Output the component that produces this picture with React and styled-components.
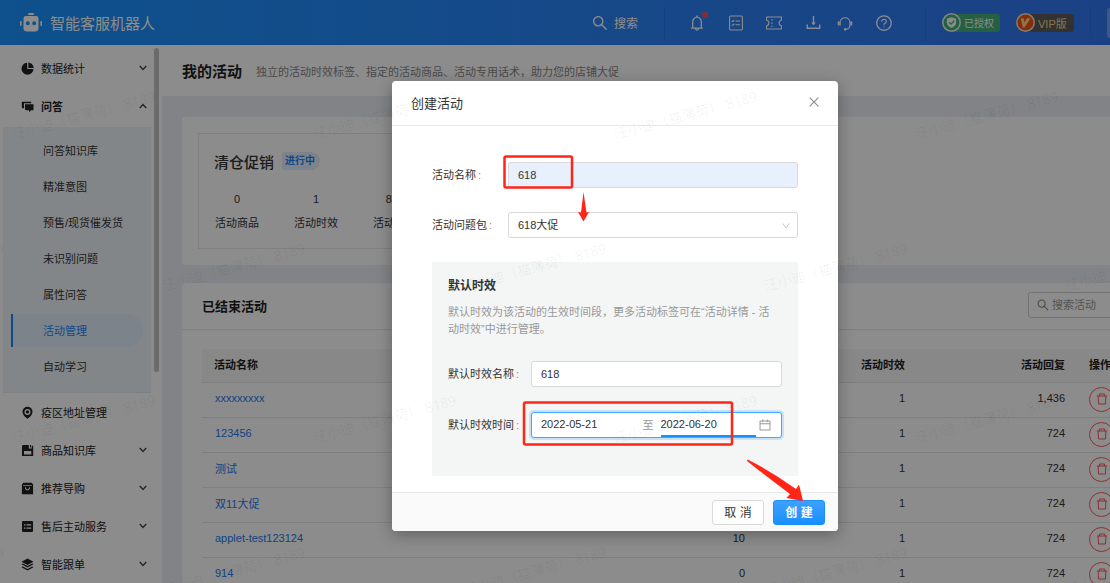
import styled, { createGlobalStyle, css } from "styled-components";
import {
    AiOutlineBell,
    AiOutlineCalendar,
    AiOutlineClose,
    AiOutlineDelete,
    AiOutlineDown,
    AiOutlineDownload,
    AiOutlineQuestionCircle,
    AiOutlineSearch
} from "react-icons/ai";

const GlobalStyle = createGlobalStyle`
    * {
        box-sizing: border-box;
    }
    html, body, #root {
        height: 100%;
    }
    body {
        margin: 0;
        overflow: hidden;
        font-family: "Liberation Sans", "Noto Sans CJK SC", sans-serif;
        font-size: 11px;
        color: #333;
    }
    button, input, select {
        font-family: inherit;
        font-size: inherit;
        color: inherit;
    }
    h1, h2, h3, p, ul {
        margin: 0;
        padding: 0;
    }
    ul {
        list-style: none;
    }
    a {
        color: inherit;
        text-decoration: none;
    }
`

const Page = styled.div`
    min-width: 1230px;
    height: 100vh;
    display: flex;
    flex-direction: column;
    position: relative;
    overflow: hidden;
`

/* ---------- header ---------- */

const Header = styled.header`
    height: 45px;
    flex: none;
    display: flex;
    align-items: center;
    padding: 0 20px;
    color: #fff;
    background: linear-gradient(90deg, #1a94ff 0%, #2a84f8 50%, #3474f0 100%);
`

const Brand = styled.h1`
    display: flex;
    align-items: center;
    gap: 8px;
    margin-right: auto;
    font-size: 15px;
    font-weight: 400;
`

const HeaderGroup = styled.div`
    display: flex;
    align-items: center;
    gap: ${props => props.$gap || 16}px;
    padding: 0 ${props => props.$right || 16}px 0 ${props => props.$left || 16}px;
    height: 32px;
    border-right: 1px solid rgba(0, 0, 0, 0.08);
`

const IconGroup = styled.div`
    display: flex;
    gap: 14px;
`

const HeaderButton = styled.button`
    display: flex;
    align-items: center;
    gap: 5px;
    padding: 0;
    border: none;
    background: none;
    color: #fff;
    font-size: 12px;
    position: relative;
    cursor: pointer;
`

const RedDot = styled.span`
    position: absolute;
    top: -2px;
    right: -2px;
    width: 6px;
    height: 6px;
    border-radius: 50%;
    background: #ff4d4f;
`

const Badge = styled.span`
    display: flex;
    align-items: center;
    gap: 3px;
    width: 58px;
    height: 18px;
    border-radius: 9px 3px 3px 9px;
    white-space: nowrap;
    font-size: ${props => props.$vip ? 11 : 10}px;
    color: ${props => props.$vip ? "#f5d58a" : "#fff"};
    background: ${props => props.$vip ? "#5c5c5c" : "#45b07a"};
`

const UserBox = styled.div`
    width: 103px;
    height: 30px;
    margin-left: 16px;
    border-radius: 3px;
    background: rgba(255, 255, 255, 0.3);
`

const RobotIcon = () => (
    <svg width="22" height="20" viewBox="0 0 22 20" fill="#fff">
        <rect x="8" y="0" width="6" height="2" rx="1"/>
        <path fillRule="evenodd" d="M6 3h10a2.500 2.500 0 0 1 2.500 2.500v10c0 2-1.500 3-3.500 3H7c-2 0-3.500-1-3.500-3v-10A2.500 2.500 0 0 1 6 3zm1.800 5.200a2 2 0 1 0 0 4 2 2 0 0 0 0-4zm6.400 0a2 2 0 1 0 0 4 2 2 0 0 0 0-4z"/>
        <rect x="0" y="8" width="1.600" height="5" rx=".8"/>
        <rect x="20.400" y="8" width="1.600" height="5" rx=".8"/>
    </svg>
)

const LineIcon = styled.svg`
    width: 16px;
    height: 16px;
    fill: none;
    stroke: currentColor;
    stroke-width: 1.1;
    stroke-linecap: round;
    stroke-linejoin: round;
`

const TodoIcon = () => (
    <LineIcon viewBox="0 0 16 16">
        <rect x="1.600" y="1" width="12.800" height="14" rx="1.200"/>
        <path d="M4.200 6l.6.6L6 5.400M8 6h3.600M4.200 9.800l.6.6L6 9.200M8 9.800h3.600"/>
    </LineIcon>
)

const TicketIcon = () => (
    <LineIcon viewBox="0 0 16 16">
        <path d="M.6 2h14.800v3.200c-1.500.3-2.300 1.400-2.300 2.800s.8 2.500 2.300 2.800V14H.6v-3.200C2.100 10.500 2.900 9.400 2.900 8S2.100 5.500.6 5.200z"/>
        <path d="M6 4.500v.7M6 7.700v.7M6 10.800v.7"/>
    </LineIcon>
)

const HeadsetIcon = () => (
    <LineIcon viewBox="0 0 16 16">
        <path d="M3.200 10.300V7a4.900 4.900 0 0 1 9.700 0v3.200c0 2.300-1.400 3.700-3.600 4.100"/>
        <path strokeWidth="2" d="M1.700 7.200v2.200M14.300 7.200v2.200"/>
        <circle cx="8.200" cy="14.300" r=".8" fill="currentColor"/>
    </LineIcon>
)

const ShieldMark = () => (
    <svg width="19" height="19" viewBox="0 0 19 19">
        <circle cx="9.500" cy="9.500" r="8.700" fill="#45b07a" stroke="#e8f5ee" strokeWidth="1.500"/>
        <path fill="#f4fff8" d="M9.500 4.200l4.600 1.500v4c0 2.400-1.900 4.100-4.600 5.200-2.700-1.100-4.600-2.800-4.600-5.200v-4z"/>
        <path fill="none" stroke="#45b07a" strokeWidth="1.300" d="M7 9.200l2 1.900 3.100-3.300"/>
    </svg>
)

const VipMark = () => (
    <svg width="19" height="19" viewBox="0 0 19 19">
        <circle cx="9.500" cy="9.500" r="8.700" fill="#f2570f" stroke="#f7ded0" strokeWidth="1.500"/>
        <path fill="#ffd98c" d="M4.700 5.800l3-.5.8 4.300 2.500-4.400h3.400L8.600 14.400H6.900z"/>
    </svg>
)

/* ---------- sidebar ---------- */

const Body = styled.div`
    flex: 1;
    display: flex;
    min-height: 0;
`

const Sidebar = styled.nav`
    width: 162px;
    flex: none;
    display: flex;
    align-items: flex-start;
    background: #fff;
    overflow: hidden;
`

const Menu = styled.ul`
    flex: 1;
    padding: 4px 0 0 3px;
`

const MenuLink = styled.a`
    height: 38px;
    display: flex;
    align-items: center;
    gap: 7px;
    padding: 0 7px 0 18px;
    color: #222;
    font-weight: ${props => props.$open ? 600 : 400};
`

const MenuIcon = styled.svg`
    width: 13px;
    height: 13px;
    flex: none;
    fill: #222;
`

const Arrow = styled.svg`
    width: 8px;
    height: 6px;
    margin-left: auto;
    fill: none;
    stroke: #444;
    stroke-width: 1.4;
    transform: ${props => props.$up ? "rotate(180deg)" : "none"};
`

const SubMenu = styled.ul`
    margin: 2px 3px 0 0;
    padding: 7px 8px 9px;
    display: flex;
    flex-direction: column;
    gap: 3px;
    background: #eff5f8;
    border-bottom: 1px solid #e4ebee;
`

const SubLink = styled.a`
    display: flex;
    align-items: center;
    height: 33px;
    padding: 0 0 1px 30px;
    border-left: 2px solid transparent;
    border-radius: 0 17px 17px 0;
    white-space: nowrap;
    color: #333;
    ${props => props.$active && css`
        color: #1f86f5;
        border-left-color: #1f86f5;
        background: #e2eefc;
    `}
`

const ScrollThumb = styled.div`
    width: 5px;
    height: 324px;
    margin: 3px 3px 0 0;
    border-radius: 3px;
    background: #c4c4c4;
`

const menuIcons = {
    pie: <path d="M6 .8A6 6 0 1 0 12.500 7H6.400zM7.400.5v5.400h5.300A5.600 5.600 0 0 0 7.400.5z"/>,
    chat: <path d="M.8 1.800h9.400v1.400H3v5H2.100a1.200 1.200 0 0 1-1.300-1.200zM4 4.200h8.500v6H10l-2 2v-2H5.200A1.200 1.200 0 0 1 4 9z"/>,
    pin: <path fillRule="evenodd" d="M6.500.7a5 5 0 0 1 5 5c0 2.900-2.300 5.300-5 7-2.700-1.700-5-4.100-5-7a5 5 0 0 1 5-5zm0 2.200a3 3 0 1 0 0 6 3 3 0 0 0 0-6zm0 1.300a1.700 1.700 0 1 1 0 3.400 1.700 1.700 0 0 1 0-3.400z"/>,
    disk: <path fillRule="evenodd" d="M1.800 1h6v3.500h3V1.200l1.400 1V12H1V2zM3 7v3.500h7.300V7zM9 1h1v2.500H9z"/>,
    bag: <path fillRule="evenodd" d="M2.300.8h8.400l1.400 1.700v9.700H.9V2.500zM2.200 3h8.600v.7H2.200zM4 5.200c0 4.200 5 4.200 5 0h-.9c0 2.800-3.200 2.800-3.200 0z"/>,
    list: <path fillRule="evenodd" d="M2 1h9a1 1 0 0 1 1 1v9a1 1 0 0 1-1 1H2a1 1 0 0 1-1-1V2a1 1 0 0 1 1-1zm1 3.300v1.200h1.500V4.300zm2.500 0v1.200h4.700V4.300zM3 7.500v1.200h1.500V7.500zm2.500 0v1.200h4.700V7.500z"/>,
    layers: <path d="M6.500.5l6 3.200-6 3.200-6-3.200zM1.800 5.600l4.700 2.500 4.700-2.500 1.300.7-6 3.200-6-3.200zM1.800 8.600l4.700 2.500 4.700-2.500 1.300.7-6 3.200-6-3.200z"/>
}

const topMenu = [
    { icon: "pie", label: "数据统计", arrow: true },
    {
        icon: "chat",
        label: "问答",
        arrow: true,
        children: ["问答知识库", "精准意图", "预售/现货催发货", "未识别问题", "属性问答", "活动管理", "自动学习"]
    },
    { icon: "pin", label: "疫区地址管理" },
    { icon: "disk", label: "商品知识库", arrow: true },
    { icon: "bag", label: "推荐导购", arrow: true },
    { icon: "list", label: "售后主动服务", arrow: true },
    { icon: "layers", label: "智能跟单", arrow: true }
]

const MenuItem = ({ item }) => (
    <li>
        <MenuLink href="#" $open={!!item.children}>
            <MenuIcon viewBox="0 0 13 13">{menuIcons[item.icon]}</MenuIcon>
            <span>{item.label}</span>
            {item.arrow ? (
                <Arrow viewBox="0 0 8 6" $up={!!item.children}>
                    <path d="M.8 1L4 4.400 7.200 1"/>
                </Arrow>
            ) : null}
        </MenuLink>
        {item.children ? (
            <SubMenu>
                {item.children.map(e => (
                    <li key={e}>
                        <SubLink href="#" $active={e === "活动管理"}>{e}</SubLink>
                    </li>
                ))}
            </SubMenu>
        ) : null}
    </li>
)

/* ---------- main ---------- */

const Main = styled.main`
    flex: 1;
    min-width: 0;
    overflow: hidden;
    background: #eceff4;
`

const PageTitle = styled.div`
    height: 51px;
    display: flex;
    align-items: center;
    gap: 14px;
    padding: 0 20px;
    background: #fff;
    color: #888;
    h2 {
        font-size: 15px;
        font-weight: 600;
        color: #222;
    }
`

const Content = styled.div`
    display: flex;
    flex-direction: column;
    gap: 18px;
    padding: 21px 20px 0;
`

const Card = styled.section`
    background: #fff;
    border-radius: 3px;
`

const CurrentCard = styled(Card)`
    padding: 16px;
`

const Activity = styled.div`
    width: 420px;
    height: 116px;
    padding: 16px 15px;
    border: 1px solid #e8e8e8;
`

const ActivityTitle = styled.div`
    display: flex;
    align-items: center;
    gap: 8px;
    height: 22px;
    h3 {
        font-size: 15px;
        font-weight: 500;
    }
`

const Tag = styled.span`
    padding: 0 5px 0 3px;
    line-height: 18px;
    border-radius: 2px 9px 9px 2px;
    font-size: 10px;
    font-weight: 600;
    color: #1f86f5;
    background: #e2eefc;
`

const Stats = styled.ul`
    display: flex;
    gap: 33px;
    margin-top: 15px;
    li {
        width: 46px;
        text-align: center;
        line-height: 24px;
    }
    span {
        display: block;
    }
`

const CardHead = styled.div`
    height: 47px;
    display: flex;
    align-items: center;
    justify-content: space-between;
    padding: 0 20px 2px;
    border-bottom: 1px solid #e8e8e8;
    h3 {
        font-size: 13px;
        font-weight: 600;
        color: #222;
    }
`

const SearchBox = styled.label`
    width: 162px;
    height: 26px;
    display: flex;
    align-items: center;
    gap: 2px;
    padding: 0 7px;
    border: 1px solid #d0d0d0;
    border-radius: 3px;
    color: #888;
    input {
        width: 100%;
        padding: 0;
        border: none;
        outline: none;
        background: none;
    }
    input::placeholder {
        color: #999;
    }
    svg {
        flex: none;
    }
`

const TableWrap = styled.div`
    padding: 19px 20px 0;
`

const Table = styled.table`
    width: 100%;
    table-layout: fixed;
    border-collapse: collapse;
    th, td {
        padding: 0 12px 3px;
        text-align: right;
        border-bottom: 1px solid #e8e8e8;
    }
    th {
        height: 33px;
        font-weight: 600;
        color: #222;
        background: #f8f8f8;
    }
    td {
        height: 35px;
    }
    th:first-child, td:first-child, th:last-child, td:last-child {
        text-align: left;
    }
    td:last-child {
        padding-bottom: 0;
    }
    a {
        padding-left: 1px;
        color: #1f78ee;
    }
`

const NumberCol = styled.col`
    width: 160px;
`

const ActionCol = styled.col`
    width: 113px;
`

const DeleteButton = styled.button`
    width: 25px;
    height: 25px;
    display: flex;
    align-items: center;
    justify-content: center;
    padding: 0 0 2px;
    border: 1px solid #ff5a5a;
    border-radius: 50%;
    background: none;
    color: #ff5a5a;
`

const rows = [
    { name: "xxxxxxxxx", goods: 0, times: 1, replies: "1,436" },
    { name: "123456", goods: 0, times: 1, replies: "724" },
    { name: "测试", goods: 0, times: 1, replies: "724" },
    { name: "双11大促", goods: 0, times: 1, replies: "724" },
    { name: "applet-test123124", goods: 10, times: 1, replies: "724" },
    { name: "914", goods: 0, times: 1, replies: "724" }
]

/* ---------- dialog ---------- */

const Mask = styled.div`
    position: absolute;
    inset: 0;
    z-index: 10;
    display: flex;
    justify-content: center;
    align-items: flex-start;
    padding-top: 81px;
    background: rgba(0, 0, 0, 0.45);
`

const Dialog = styled.div`
    width: 446px;
    position: relative;
    border-radius: 4px;
    background: #fff;
    box-shadow: 0 4px 16px rgba(0, 0, 0, 0.3);
`

const DialogHead = styled.div`
    height: 45px;
    display: flex;
    align-items: center;
    justify-content: space-between;
    padding: 0 17px 2px 19px;
    border-bottom: 1px solid #e8e8e8;
    h2 {
        font-size: 13px;
        font-weight: 400;
    }
`

const CloseButton = styled.button`
    display: flex;
    padding: 0;
    border: none;
    background: none;
    color: #8c8c8c;
`

const DialogBody = styled.form`
    display: flex;
    flex-direction: column;
    gap: 24px;
    padding: 36px 40px 16px;
`

const Field = styled.div`
    display: grid;
    grid-template-columns: ${props => props.$label}px minmax(0, 1fr);
    align-items: center;
    label {
        padding-bottom: 3px;
        white-space: nowrap;
    }
`

const Colon = styled.span`
    margin-left: 2px;
    color: #888;
`

const control = css`
    width: 100%;
    height: 26px;
    padding: 0 9px;
    border: 1px solid #d9d9d9;
    border-radius: 3px;
    outline: none;
    background: #fff;
    color: #333;
`

const TextInput = styled.input`
    ${control}
    ${props => props.$filled && css`
        background: #e8f0fe;
    `}
`

const SelectWrap = styled.div`
    position: relative;
    color: #bbb;
    select {
        ${control}
        appearance: none;
    }
    svg {
        position: absolute;
        right: 7px;
        top: 9px;
        pointer-events: none;
    }
`

const Panel = styled.fieldset`
    display: flex;
    flex-direction: column;
    min-width: 0;
    margin: 0;
    padding: 16px 16px 38px;
    border: none;
    border-radius: 2px;
    background: #f4f5f5;
    h3 {
        font-size: 12px;
        font-weight: 600;
        line-height: 17px;
    }
    p {
        margin: 9px 0 23px;
        padding-right: 8px;
        line-height: 17px;
        color: #999;
    }
`

const PanelFields = styled.div`
    display: flex;
    flex-direction: column;
    gap: 25px;
`

const DateRange = styled.div`
    ${control}
    display: flex;
    align-items: center;
    border-color: #40a9ff;
    box-shadow: 0 0 0 2px rgba(24, 144, 255, 0.2);
    color: #999;
    svg {
        flex: none;
        margin-left: 2px;
    }
`

const DateInput = styled.input`
    flex: 1;
    min-width: 0;
    align-self: stretch;
    padding: 0;
    border: none;
    border-bottom: 2px solid ${props => props.$focused ? "#1890ff" : "transparent"};
    outline: none;
    background: none;
    color: #333;
`

const DateGap = styled.span`
    width: 24px;
    padding: 0 0 2px 6px;
`

const DialogFoot = styled.div`
    height: 39px;
    display: flex;
    align-items: center;
    justify-content: flex-end;
    gap: 9px;
    padding: 0 13px;
    border-top: 1px solid #e8e8e8;
    border-radius: 0 0 4px 4px;
    background: #fafafa;
`

const Button = styled.button`
    width: 52px;
    height: 25px;
    padding: 0 0 2px;
    border: 1px solid ${props => props.$primary ? "#1890ff" : "#d9d9d9"};
    border-radius: 3px;
    font-size: 12px;
    font-weight: ${props => props.$primary ? 600 : 400};
    color: ${props => props.$primary ? "#fff" : "#333"};
    background: ${props => props.$primary ? "linear-gradient(#40a0ff, #1890ff)" : "#fff"};
`

const GuideLayer = styled.svg`
    position: absolute;
    top: 0;
    left: 0;
    width: 446px;
    height: 450px;
    pointer-events: none;
`

const Guides = () => (
    <GuideLayer viewBox="0 0 446 450" fill="#ff2617">
        <g fill="none" stroke="#ff2617" strokeWidth="2.500">
            <rect x="112.500" y="75.500" width="67.500" height="31" rx="1.500"/>
            <rect x="132" y="321.500" width="208" height="42" rx="1.500"/>
        </g>
        <path d="M191.500 111l3 20.500 2.500-.5-5.500 9.500-5.500-9.500 3 .5z"/>
        <path d="M355.500 378.500Q379 390 404 408l3-4.500 4 16.500-16.500-3 3.500-4Q375 396 355 380z"/>
    </GuideLayer>
)

/* ---------- watermark ---------- */

const WatermarkLayer = styled.div`
    position: absolute;
    inset: 0;
    z-index: 20;
    overflow: hidden;
    pointer-events: none;
`

const Mark = styled.span`
    position: absolute;
    left: ${props => props.$x}px;
    top: ${props => props.$y}px;
    transform: rotate(-15deg);
    transform-origin: left bottom;
    white-space: pre;
    font-family: "Noto Sans", "Noto Sans CJK SC", sans-serif;
    font-size: 14px;
    font-weight: 300;
    line-height: 20px;
    color: rgba(0, 0, 0, 0.08);
`

// odd rows start half a tile to the left and hold one more mark
const marks = [0, 1, 2, 3].flatMap(row =>
    Array.from({ length: row % 2 ? 5 : 4 }, (_, col) => ({
        x: 15 + col * 301 - (row % 2 ? 151 : 0),
        y: 124 + row * 152
    }))
)

const Watermark = () => (
    <WatermarkLayer aria-hidden="true">
        {marks.map((e, i) => (
            <Mark key={i} $x={e.x} $y={e.y}>汪小迪（猫薄荷） 8189</Mark>
        ))}
    </WatermarkLayer>
)

const TopBar = () => (
    <Header>
        <Brand><RobotIcon/>智能客服机器人</Brand>
        <HeaderGroup $right={26}>
            <HeaderButton><AiOutlineSearch size={18}/>搜索</HeaderButton>
        </HeaderGroup>
        <HeaderGroup $left={23} $right={32} $gap={22}>
            <HeaderButton aria-label="通知"><AiOutlineBell size={18}/><RedDot/></HeaderButton>
            <HeaderButton aria-label="任务"><TodoIcon/></HeaderButton>
            <HeaderButton aria-label="卡券"><TicketIcon/></HeaderButton>
            <IconGroup>
                <HeaderButton aria-label="下载"><AiOutlineDownload size={19}/></HeaderButton>
                <HeaderButton aria-label="客服"><HeadsetIcon/></HeaderButton>
            </IconGroup>
            <HeaderButton aria-label="帮助"><AiOutlineQuestionCircle size={18}/></HeaderButton>
        </HeaderGroup>
        <HeaderGroup>
            <Badge><ShieldMark/>已授权</Badge>
            <Badge $vip><VipMark/>VIP版</Badge>
        </HeaderGroup>
        <UserBox/>
    </Header>
)

const ActivityTable = () => (
    <Table>
        <colgroup>
            <col/>
            <NumberCol/>
            <NumberCol/>
            <NumberCol/>
            <ActionCol/>
        </colgroup>
        <thead>
            <tr>
                <th>活动名称</th>
                <th>活动商品</th>
                <th>活动时效</th>
                <th>活动回复</th>
                <th>操作</th>
            </tr>
        </thead>
        <tbody>
            {rows.map(e => (
                <tr key={e.name}>
                    <td><a href="#">{e.name}</a></td>
                    <td>{e.goods}</td>
                    <td>{e.times}</td>
                    <td>{e.replies}</td>
                    <td><DeleteButton aria-label="删除"><AiOutlineDelete size={14}/></DeleteButton></td>
                </tr>
            ))}
        </tbody>
    </Table>
)

const CreateDialog = () => (
    <Mask>
        <Dialog role="dialog" aria-labelledby="dialog-title">
            <DialogHead>
                <h2 id="dialog-title">创建活动</h2>
                <CloseButton aria-label="关闭"><AiOutlineClose size={14}/></CloseButton>
            </DialogHead>
            <DialogBody>
                <Field $label={76}>
                    <label htmlFor="name">活动名称<Colon>:</Colon></label>
                    <TextInput id="name" defaultValue="618" $filled/>
                </Field>
                <Field $label={76}>
                    <label htmlFor="pack">活动问题包<Colon>:</Colon></label>
                    <SelectWrap>
                        <select id="pack" defaultValue="618大促">
                            <option>618大促</option>
                        </select>
                        <AiOutlineDown size={10}/>
                    </SelectWrap>
                </Field>
                <Panel>
                    <h3>默认时效</h3>
                    <p>默认时效为该活动的生效时间段，更多活动标签可在“活动详情 - 活动时效”中进行管理。</p>
                    <PanelFields>
                        <Field $label={83}>
                            <label htmlFor="period">默认时效名称<Colon>:</Colon></label>
                            <TextInput id="period" defaultValue="618"/>
                        </Field>
                        <Field $label={83}>
                            <label htmlFor="start">默认时效时间<Colon>:</Colon></label>
                            <DateRange>
                                <DateInput id="start" defaultValue="2022-05-21"/>
                                <DateGap>至</DateGap>
                                <DateInput aria-label="结束日期" defaultValue="2022-06-20" $focused/>
                                <AiOutlineCalendar size={14}/>
                            </DateRange>
                        </Field>
                    </PanelFields>
                </Panel>
            </DialogBody>
            <DialogFoot>
                <Button>取 消</Button>
                <Button $primary>创 建</Button>
            </DialogFoot>
            <Guides/>
        </Dialog>
    </Mask>
)

export default function App() {
    return (
        <>
            <GlobalStyle/>
            <Page>
                <TopBar/>
                <Body>
                    <Sidebar>
                        <Menu>
                            {topMenu.map(e => <MenuItem key={e.label} item={e}/>)}
                        </Menu>
                        <ScrollThumb/>
                    </Sidebar>
                    <Main>
                        <PageTitle>
                            <h2>我的活动</h2>
                            <span>独立的活动时效标签、指定的活动商品、活动专用话术，助力您的店铺大促</span>
                        </PageTitle>
                        <Content>
                            <CurrentCard>
                                <Activity>
                                    <ActivityTitle>
                                        <h3>清仓促销</h3>
                                        <Tag>进行中</Tag>
                                    </ActivityTitle>
                                    <Stats>
                                        <li><span>0</span>活动商品</li>
                                        <li><span>1</span>活动时效</li>
                                        <li><span>814</span>活动回复</li>
                                    </Stats>
                                </Activity>
                            </CurrentCard>
                            <Card>
                                <CardHead>
                                    <h3>已结束活动</h3>
                                    <SearchBox>
                                        <AiOutlineSearch size={14}/>
                                        <input aria-label="搜索活动" placeholder="搜索活动"/>
                                    </SearchBox>
                                </CardHead>
                                <TableWrap>
                                    <ActivityTable/>
                                </TableWrap>
                            </Card>
                        </Content>
                    </Main>
                </Body>
                <CreateDialog/>
                <Watermark/>
            </Page>
        </>
    )
}
